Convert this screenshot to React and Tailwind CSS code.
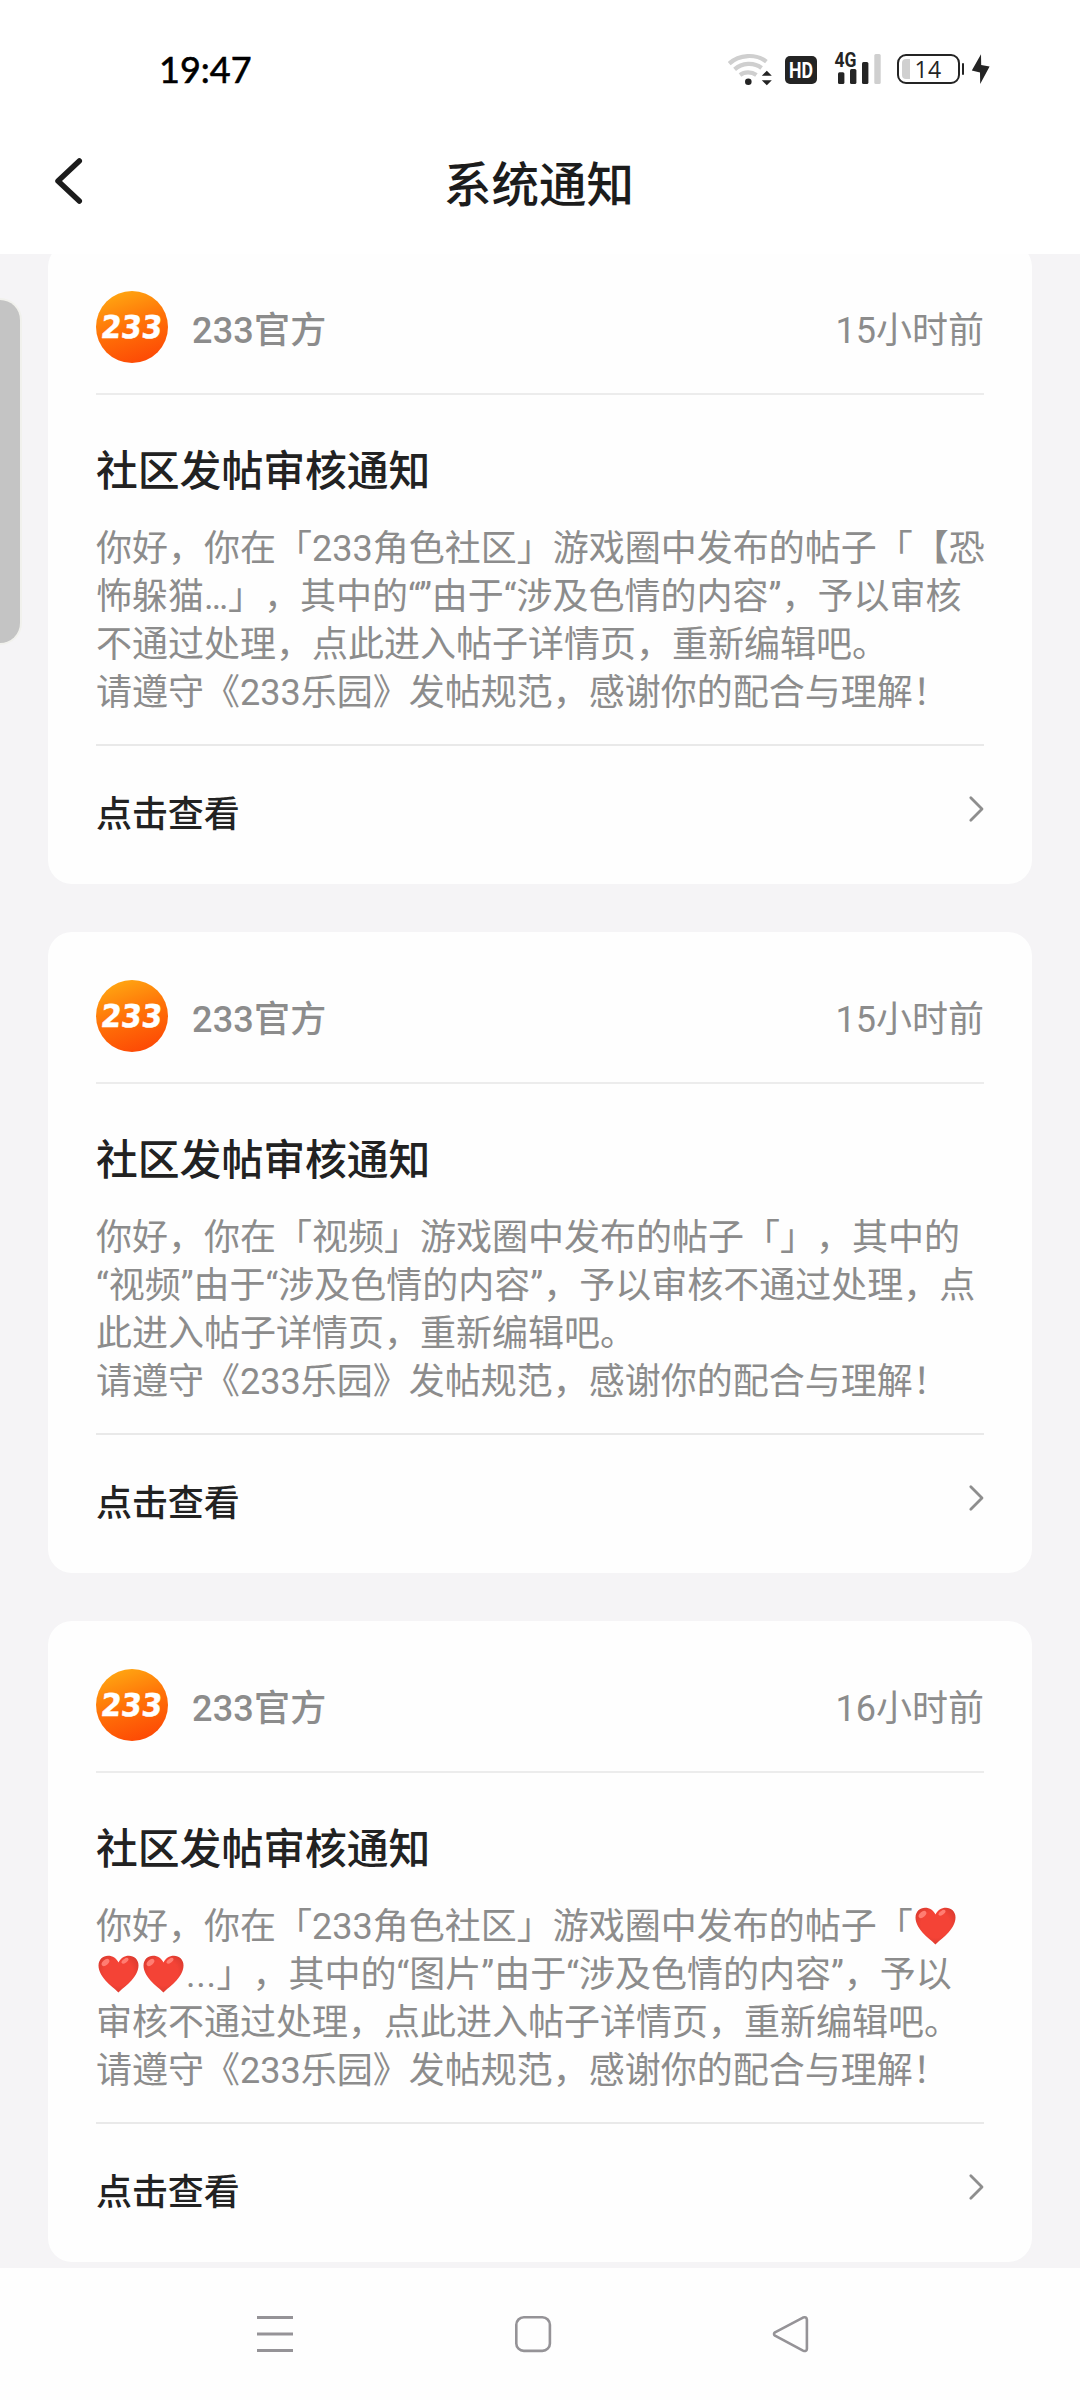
import React from "react";

function WifiIcon() {
  return (
    <svg width="46" height="36" viewBox="0 0 46 36" className="shrink-0" fill="none">
      <g stroke="#cfcfcf" strokeWidth="4.2">
        <path d="M1.2 12.6C11 3.4 28 2.4 38.4 10.6" />
        <path d="M6.6 18.4C14 11.6 26 11 33.6 17" />
        <path d="M12 24C16.500 20.400 23.500 20.400 28.400 24" />
      </g>
      <circle cx="20.300" cy="30.800" r="3.300" fill="#242424" />
      <path d="M38.800 19.800l5 5h-10z M38.800 34.200l5-5h-10z" fill="#242424" />
    </svg>
  );
}

function SignalIcon() {
  return (
    <svg width="48" height="36" viewBox="0 0 48 36" className="shrink-0 overflow-visible">
      <rect x="4" y="21.300" width="6.400" height="11.700" rx="1.500" fill="#242424" />
      <rect x="16" y="18" width="6.400" height="15" rx="1.500" fill="#242424" />
      <rect x="28" y="11" width="6.400" height="22" rx="1.500" fill="#242424" />
      <rect x="40.300" y="3" width="6.400" height="30" rx="1.500" fill="#cfcfcf" />
      <text x="0.500" y="15.800" textLength="22" lengthAdjust="spacingAndGlyphs" fontFamily="Roboto" fontWeight="700" fontSize="20" fill="#242424" stroke="#fff" strokeWidth="2" paintOrder="stroke">4G</text>
    </svg>
  );
}

function StatusBar() {
  return (
    <div className="flex h-[140px] items-start pl-[159px] pr-[89px]">
      <div className="mt-[44px] font-[Lato,sans-serif] text-[36px] leading-[50px] text-black [-webkit-text-stroke:0.600px_black]">19:47</div>
      <div className="mt-[51px] ml-auto flex h-[36px] items-start">
        <WifiIcon />
        <div className="mt-[5px] ml-[11px] flex h-[28px] w-[32px] items-center justify-center rounded-[5px] bg-[#242424]">
          <svg width="26" height="28" viewBox="0 0 26 28" className="overflow-visible">
            <text x="1" y="22" textLength="24" lengthAdjust="spacingAndGlyphs" fontFamily="Roboto" fontWeight="700" fontSize="22" fill="#fff">HD</text>
          </svg>
        </div>
        <div className="ml-[17px]"><SignalIcon /></div>
        <div className="mt-[3px] ml-[15px] flex h-[30px] w-[63px] items-center rounded-[9px] border-2 border-[#242424] pl-[3px]">
          <div className="h-[20px] w-[8px] rounded-l-[4px] bg-[#d0d0d0]" />
          <div className="ml-[5px] font-['Open_Sans',sans-serif] text-[23px] leading-[26px] tracking-[0.3px] text-[#242424]">14</div>
        </div>
        <div className="mt-[12px] ml-[2px] h-[12px] w-[2.500px] rounded-full bg-[#242424]" />
        <svg width="20" height="32" viewBox="0 0 20 32" className="mt-[2px] ml-[7px]">
          <path d="M10 1.200L0.800 17.600L9 19.600L9.200 31L18.600 13.600L10.200 12z" fill="#242424" />
        </svg>
      </div>
    </div>
  );
}

function TitleBar() {
  return (
    <div className="grid h-[114px] grid-cols-[1fr_auto_1fr] items-start">
      <svg width="30" height="50" viewBox="0 0 30 50" className="mt-[16px] ml-[53px]" fill="none">
        <path d="M26.300 5L5 25L26.300 45" stroke="#1c1c1c" strokeWidth="5.500" strokeLinecap="round" strokeLinejoin="round" />
      </svg>
      <h1 className="mt-[16px] mr-[2px] text-[47.500px] leading-[60px] font-medium text-[#1c1c1c]">系统通知</h1>
    </div>
  );
}

function Avatar() {
  return (
    <svg width="72" height="72" viewBox="0 0 72 72" className="shrink-0">
      <defs>
        <linearGradient id="sun" x1="0.250" y1="0" x2="0.600" y2="1">
          <stop offset="0" stopColor="#ffa812" />
          <stop offset="0.500" stopColor="#ff7208" />
          <stop offset="1" stopColor="#fd4a05" />
        </linearGradient>
      </defs>
      <circle cx="36" cy="36" r="36" fill="url(#sun)" />
      <text x="5" y="47.500" transform="translate(4 0) skewX(-6)" textLength="61" lengthAdjust="spacingAndGlyphs" fontFamily="DejaVu Sans" fontWeight="700" fontSize="31.500" fill="#fff" stroke="#fff" strokeWidth="0.500">233</text>
    </svg>
  );
}

function Heart() {
  return (
    <svg width="45" height="40" viewBox="0 0 45 40" className="inline-block align-[-6.500px]" role="img" aria-label="❤️">
      <defs>
        <radialGradient id="shine" cx="0.500" cy="0.450" r="0.600">
          <stop offset="0.600" stopColor="#f44336" />
          <stop offset="1" stopColor="#d93a2f" />
        </radialGradient>
      </defs>
      <path d="M22.500 38.500C19 34.500 2.500 24 2.500 11.500C2.500 5.500 7 1.800 12 1.800C16.800 1.800 20.500 4.500 22.500 8.600C24.500 4.500 28.200 1.800 33 1.800C38 1.800 42.500 5.500 42.500 11.500C42.500 24 26 34.500 22.500 38.500Z" fill="url(#shine)" />
      <ellipse cx="9.500" cy="8.500" rx="4.500" ry="2.700" transform="rotate(-42 9.500 8.500)" fill="#ff7d72" />
      <ellipse cx="29" cy="6.800" rx="4" ry="2" transform="rotate(-35 29 6.800)" fill="#ff7d72" />
    </svg>
  );
}

const closing = "请遵守《233乐园》发帖规范，感谢你的配合与理解！";

const notices = [
  {
    time: "15小时前",
    lines: [
      "你好，你在「233角色社区」游戏圈中发布的帖子「【恐",
      "怖躲猫…」，其中的“”由于“涉及色情的内容”，予以审核",
      "不通过处理，点此进入帖子详情页，重新编辑吧。",
      closing,
    ],
  },
  {
    time: "15小时前",
    lines: [
      "你好，你在「视频」游戏圈中发布的帖子「」，其中的",
      "“视频”由于“涉及色情的内容”，予以审核不通过处理，点",
      "此进入帖子详情页，重新编辑吧。",
      closing,
    ],
  },
  {
    time: "16小时前",
    lines: [
      <>你好，你在「233角色社区」游戏圈中发布的帖子「<Heart /></>,
      <><Heart /><Heart /><span className="tracking-[0.700px]">...</span>」，其中的“图片”由于“涉及色情的内容”，予以</>,
      "审核不通过处理，点此进入帖子详情页，重新编辑吧。",
      closing,
    ],
  },
];

function NoticeCard({ time, lines }) {
  return (
    <article className="h-[641px] shrink-0 rounded-[24px] bg-[#fefefe] px-12 pt-12">
      <header className="flex h-[104px] items-start border-b-2 border-[#ececec]">
        <Avatar />
        <span className="mt-[14px] ml-6 text-[36px] leading-[52px] font-medium tracking-[0.200px] text-[#8c8c8c]">233官方</span>
        <span className="mt-[14px] ml-auto text-[36px] leading-[52px] text-[#8c8c8c]">{time}</span>
      </header>
      <h2 className="mt-[47px] text-[41.800px] leading-[60px] font-medium text-[#222]">社区发帖审核通知</h2>
      <div className="mt-[23px] flex h-[221px] flex-col border-b-2 border-[#e9e9e9] whitespace-nowrap text-[#8c8c8c]">
        {lines.map((line, i) => (
          <p key={i} className="h-[48px] text-[36px] leading-[48px]">{line}</p>
        ))}
      </div>
      <footer className="flex items-start">
        <span className="mt-[43px] text-[36px] leading-[52px] font-medium tracking-[-0.100px] text-[#222]">点击查看</span>
        <svg width="16" height="28" viewBox="0 0 16 28" className="mt-[49px] ml-auto" fill="none">
          <path d="M2.800 2.800L14 14L2.800 25.200" stroke="#8e8e8e" strokeWidth="2.800" strokeLinecap="round" strokeLinejoin="round" />
        </svg>
      </footer>
    </article>
  );
}

function NavBar() {
  return (
    <nav className="flex h-[132px] items-start bg-[#fefefe] pt-[47px] pl-[256px]">
      <svg width="38" height="40" viewBox="0 0 38 40" fill="#959397">
        <rect x="1" y="1" width="36" height="3" />
        <rect x="1" y="17.500" width="36" height="3" />
        <rect x="1" y="34" width="36" height="3" />
      </svg>
      <svg width="38" height="40" viewBox="0 0 38 40" className="ml-[220px]" fill="none">
        <rect x="2.300" y="2.300" width="33.600" height="33.600" rx="7.500" stroke="#959397" strokeWidth="2.600" />
      </svg>
      <svg width="38" height="40" viewBox="0 0 38 40" className="ml-[220px]" fill="none">
        <path d="M3 17.300L31 2.600Q34.600 1.400 34.900 4.600V33.800Q34.600 37 31 35.600L3 20.700Q1 19 3 17.300Z" stroke="#959397" strokeWidth="2.600" strokeLinejoin="round" />
      </svg>
    </nav>
  );
}

export default function App() {
  return (
    <div className="relative flex h-[2400px] w-[1080px] flex-col overflow-hidden bg-[#f5f4f6] font-[Roboto,'Noto_Sans_CJK_SC',sans-serif] [text-spacing-trim:space-all]" lang="zh-CN">
      <div className="z-10 h-[254px] shrink-0 bg-white">
        <StatusBar />
        <TitleBar />
      </div>
      <main className="-mt-[11px] flex h-[2025px] shrink-0 flex-col gap-12 overflow-hidden px-12">
        {notices.map((notice, i) => (
          <NoticeCard key={i} {...notice} />
        ))}
      </main>
      <NavBar />
      <div className="absolute top-[300px] left-0 h-[343px] w-[20px] rounded-r-[20px] bg-[#c4c4c4] shadow-[0_0_0_2px_#f1f1ed]" />
    </div>
  );
}
